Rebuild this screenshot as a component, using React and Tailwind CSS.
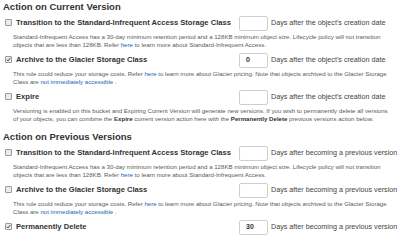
import { useState } from 'react';

const STANDARD_IA = [
  'Standard-Infrequent Access has a 30-day minimum retention period and a 128KB minimum object size. Lifecycle policy will not transition',
  <>objects that are less than 128KB. Refer <a className="text-[#1a5fb4]">here</a> to learn more about Standard-Infrequent Access.</>
];

const GLACIER = [
  <>This rule could reduce your storage costs. Refer <a className="text-[#1a5fb4]">here</a> to learn more about Glacier pricing. Note that objects archived to the Glacier Storage</>,
  <>Class are <a className="text-[#1a5fb4]">not immediately accessible</a> .</>
];

const EXPIRE = [
  'Versioning is enabled on this bucket and Expiring Current Version will generate new versions. If you wish to permanently delete all versions',
  <>of your objects, you can combine the <b className="text-[#333]">Expire</b> current version action here with the <b className="text-[#333]">Permanently Delete</b> previous versions action below.</>
];

function Checkbox({ checked, onChange }) {
  return (
    <button
      onClick={onChange}
      className="w-[7px] h-[7px] border border-[#9a9a9a] rounded-[1px] bg-[#ececec] flex items-center justify-center shrink-0 p-0"
    >
      {checked && (
        <svg viewBox="0 0 10 10" className="w-[7px] h-[7px]">
          <path d="M1.5 5.2 L4 7.8 L8.8 1.8" fill="none" stroke="#333" strokeWidth="1.8" />
        </svg>
      )}
    </button>
  );
}

function RuleRow({ label, value, suffix, desc, initial, first }) {
  const [checked, setChecked] = useState(initial);
  return (
    <div className={first ? 'mt-[1px]' : 'mt-[3px]'}>
      <div className="flex items-center h-[16px]">
        <div className="w-[239px] pl-[5px] flex items-center gap-[4px]">
          <Checkbox checked={checked} onChange={() => setChecked(!checked)} />
          <span className="text-[7.6px] font-bold text-[#333] whitespace-nowrap">{label}</span>
        </div>
        <div className="w-[29px] h-[15px] border border-[#cfcfcf] rounded-[2px] bg-white flex items-center pl-[6px] text-[7px] font-bold text-[#333]">
          {value}
        </div>
        <span className="ml-[3px] text-[7.2px] text-[#444] whitespace-nowrap">{suffix}</span>
      </div>
      {desc && (
        <div className="mt-[2px] pl-[13px] text-[6.1px] leading-[8px] text-[#5a5a5a] whitespace-nowrap">
          <div>{desc[0]}</div>
          <div>{desc[1]}</div>
        </div>
      )}
    </div>
  );
}

export default function App() {
  const creation = "Days after the object's creation date";
  const previous = 'Days after becoming a previous version';
  return (
    <div className="w-[400px] h-[241px] overflow-hidden bg-white font-['Liberation_Sans',Arial,sans-serif]">
      {/* Current version */}
      <h2 className="pl-[3px] text-[9.5px] leading-[14px] font-bold text-[#333]">Action on Current Version</h2>
      <RuleRow first label="Transition to the Standard-Infrequent Access Storage Class" value="" suffix={creation} desc={STANDARD_IA} initial={false} />
      <RuleRow label="Archive to the Glacier Storage Class" value="0" suffix={creation} desc={GLACIER} initial={true} />
      <RuleRow label="Expire" value="" suffix={creation} desc={EXPIRE} initial={false} />

      {/* Previous versions */}
      <h2 className="mt-[7px] pl-[3px] text-[9.5px] leading-[14px] font-bold text-[#333]">Action on Previous Versions</h2>
      <RuleRow first label="Transition to the Standard-Infrequent Access Storage Class" value="" suffix={previous} desc={STANDARD_IA} initial={false} />
      <RuleRow label="Archive to the Glacier Storage Class" value="" suffix={previous} desc={GLACIER} initial={false} />
      <RuleRow label="Permanently Delete" value="30" suffix={previous} initial={true} />
    </div>
  );
}
